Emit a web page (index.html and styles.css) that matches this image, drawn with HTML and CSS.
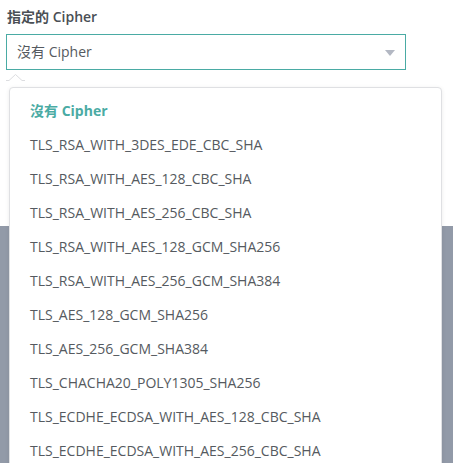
FILE: index.html
```html
<!DOCTYPE html>
<html lang="zh-Hant">
<head>
<meta charset="utf-8">
<link rel="stylesheet" href="styles.css">
</head>
<body>
<div class="page">
  <section class="form-area">
    <div class="field">
      <div class="label">指定的 Cipher</div>
      <div class="select">
        <span class="select-value">沒有 Cipher</span>
        <span class="caret"></span>
      </div>
    </div>
  </section>
  <div class="backdrop"></div>
  <svg class="popper-arrow" width="24" height="10" viewBox="0 0 24 10">
    <polyline points="0,7.5 3,7.5 9.5,1.5 16,7.5 19,7.5" fill="none" stroke="#dcdde0" stroke-width="1"/>
  </svg>
  <ul class="menu">
    <li class="menu-item selected">沒有 Cipher</li>
    <li class="menu-item">TLS_RSA_WITH_3DES_EDE_CBC_SHA</li>
    <li class="menu-item">TLS_RSA_WITH_AES_128_CBC_SHA</li>
    <li class="menu-item">TLS_RSA_WITH_AES_256_CBC_SHA</li>
    <li class="menu-item">TLS_RSA_WITH_AES_128_GCM_SHA256</li>
    <li class="menu-item">TLS_RSA_WITH_AES_256_GCM_SHA384</li>
    <li class="menu-item">TLS_AES_128_GCM_SHA256</li>
    <li class="menu-item">TLS_AES_256_GCM_SHA384</li>
    <li class="menu-item">TLS_CHACHA20_POLY1305_SHA256</li>
    <li class="menu-item">TLS_ECDHE_ECDSA_WITH_AES_128_CBC_SHA</li>
    <li class="menu-item">TLS_ECDHE_ECDSA_WITH_AES_256_CBC_SHA</li>
  </ul>
</div>
</body>
</html>
```
FILE: styles.css
```css
* { box-sizing: border-box; }
html, body {
  margin: 0;
  padding: 0;
  height: 100%;
  overflow: hidden;
  background: #ffffff;
  font-family: "Open Sans", "Noto Sans CJK TC", sans-serif;
  font-size: 14px;
  color: #555a60;
}
.page {
  position: relative;
  height: 100%;
  display: flex;
  flex-direction: column;
}
.form-area {
  height: 226px;
  flex: none;
  padding: 7px 0 0 6px;
}
.field {
  display: flex;
  flex-direction: column;
  gap: 7px;
}
.label {
  padding-left: 1px;
  font-weight: 600;
  line-height: 20px;
  color: #4a4f55;
}
.select {
  width: 400px;
  height: 36px;
  border: 1px solid #4aaba4;
  display: flex;
  align-items: center;
  justify-content: space-between;
  padding: 0 10px 0 10px;
  background: #fff;
}
.select-value {
  line-height: 20px;
  color: #555a60;
}
.caret {
  width: 0;
  height: 0;
  border-left: 5px solid transparent;
  border-right: 5px solid transparent;
  border-top: 6px solid #b3b8c3;
  margin-top: 2px;
}
.backdrop {
  flex: 1;
  background: #929aa8;
}
.popper-arrow {
  position: absolute;
  left: 6px;
  top: 73px;
}
.menu {
  position: absolute;
  left: 9px;
  top: 87px;
  width: 433px;
  margin: 0;
  padding: 6px 0 0 0;
  list-style: none;
  background: #fff;
  border: 1px solid #dfe0e3;
  border-radius: 4px;
  box-shadow: 0 1px 4px rgba(0,0,0,0.08);
}
.menu-item {
  height: 34px;
  line-height: 34px;
  padding-left: 20px;
  color: #555a60;
  white-space: nowrap;
}
.menu-item.selected {
  color: #4aaba4;
  font-weight: 700;
}
```
